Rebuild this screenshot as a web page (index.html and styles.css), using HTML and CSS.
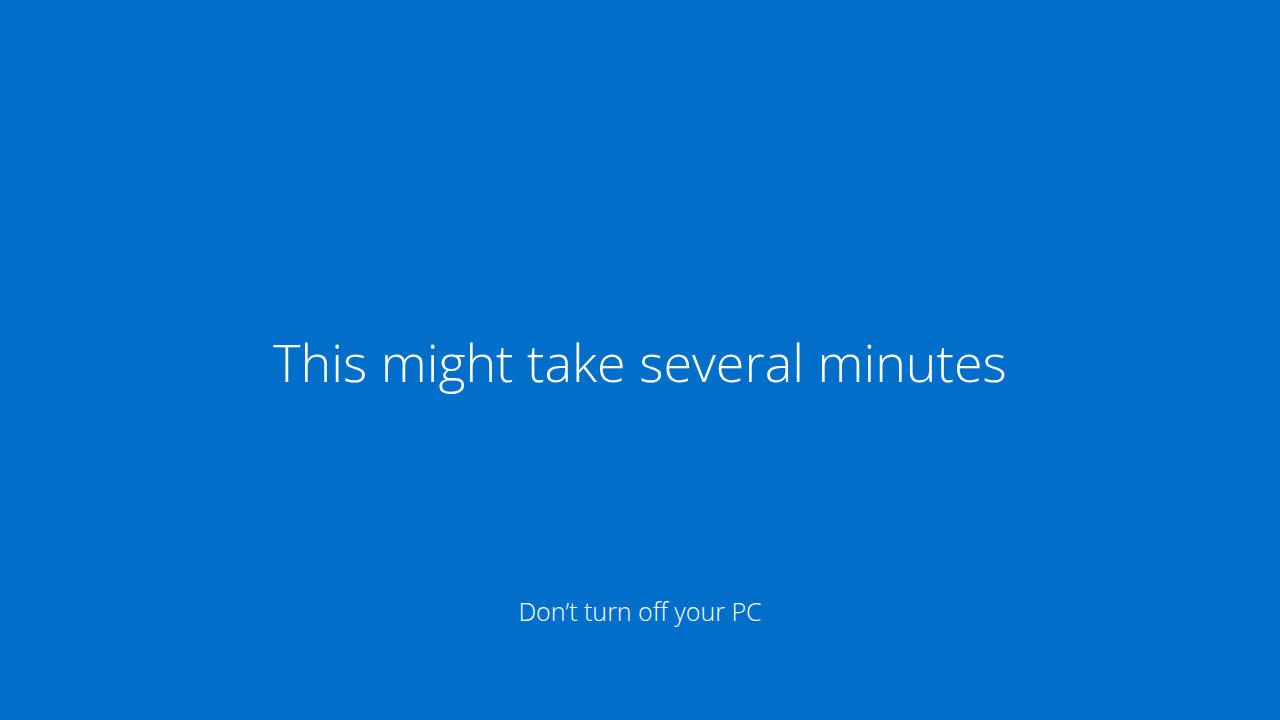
FILE: index.html
```html
<!DOCTYPE html>
<html lang="en">
<head>
    <meta charset="UTF-8">
    <meta name="viewport" content="width=device-width, initial-scale=1.0">
    <title>Updating</title>
    <link rel="stylesheet" href="styles.css">
</head>
<body>
    <div class="screen">
        <div class="message">
            <h1 class="title">This might take several minutes</h1>
        </div>
        <p class="note">Don’t turn off your PC</p>
    </div>
</body>
</html>
```

FILE: styles.css
```css
* {
    margin: 0;
    padding: 0;
    box-sizing: border-box;
}

body {
    background: #016fca;
    color: #fff;
    font-family: "Open Sans", "Noto Sans", sans-serif;
    font-weight: 300;
}

.screen {
    display: flex;
    flex-direction: column;
    height: 100vh;
}

.message {
    display: flex;
    justify-content: center;
    align-items: center;
    padding-top: 129px;
    flex: 1;
}

.title {
    font-size: 52px;
    font-weight: 300;
    line-height: 70px;
}

.note {
    text-align: center;
    font-size: 25px;
    line-height: 32px;
    padding-bottom: 93px;
}
```
